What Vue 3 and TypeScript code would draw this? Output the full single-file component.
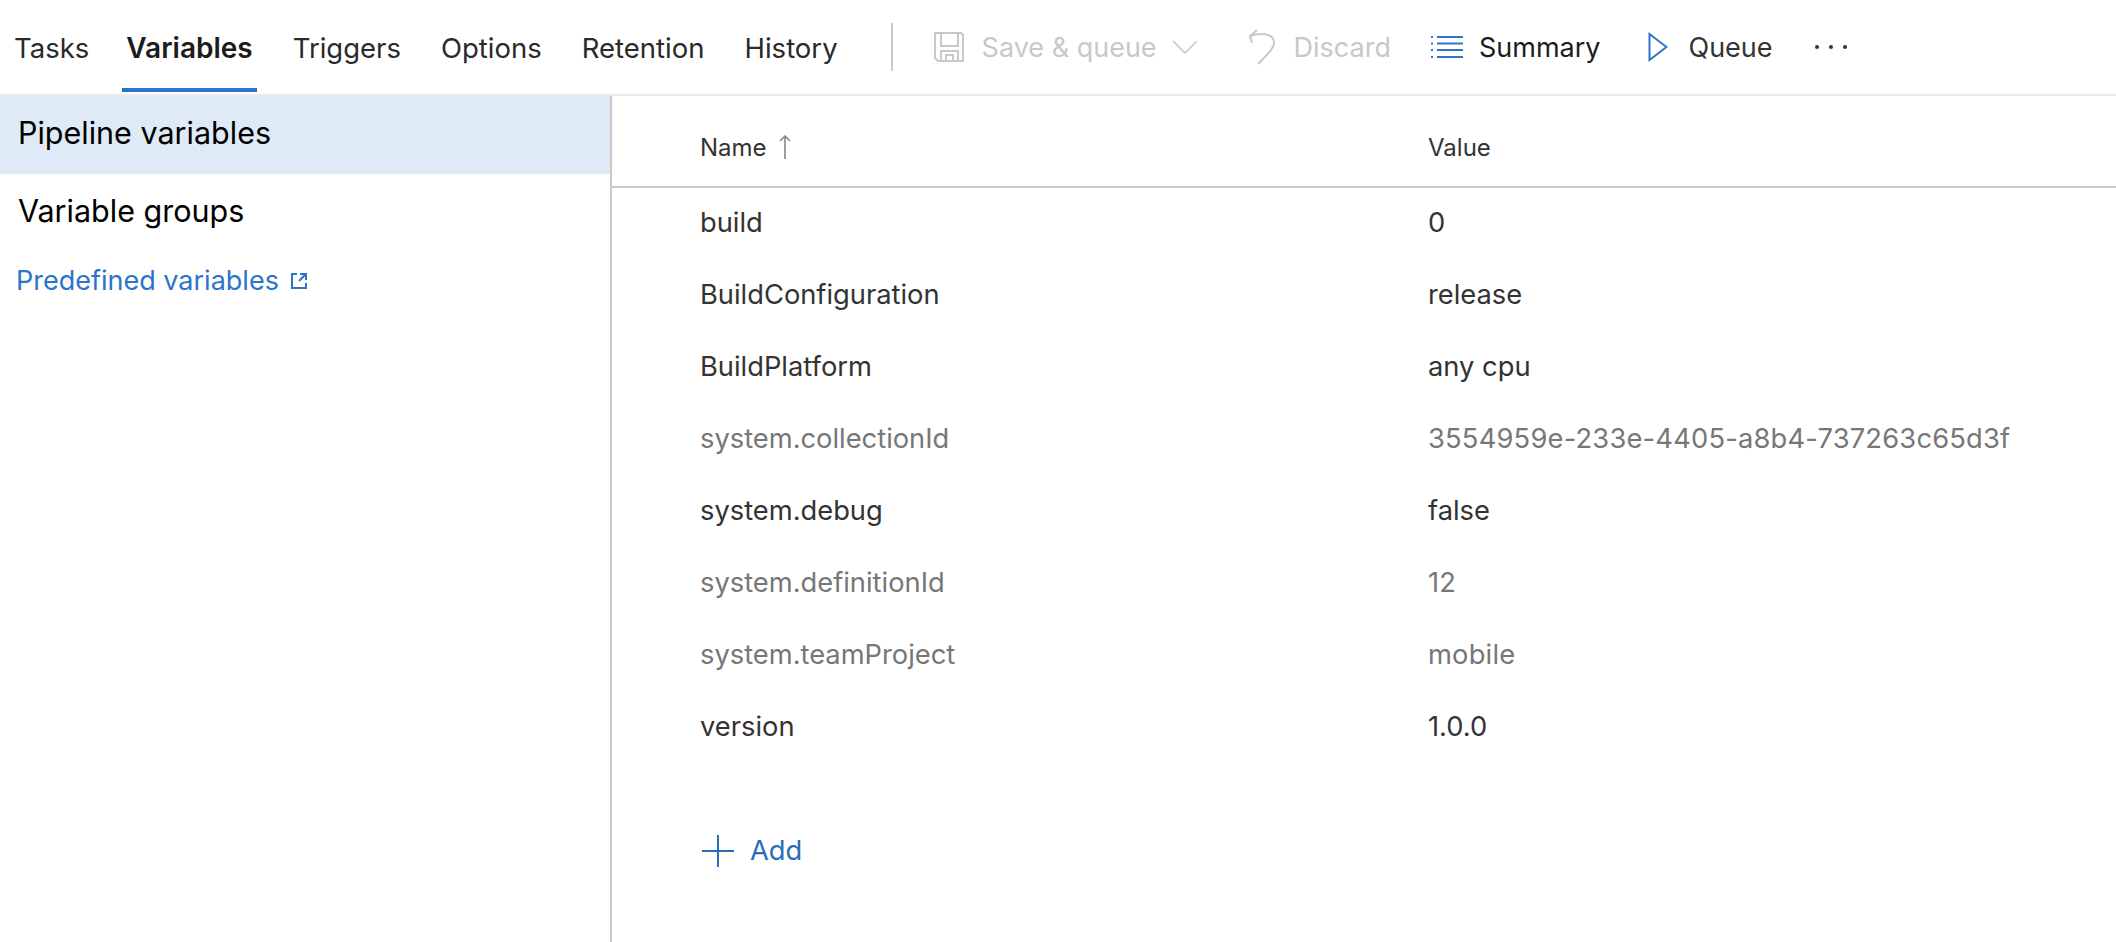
<template>
  <div class="page">
    <header class="topbar">
      <nav class="tabs">
        <div v-for="tab in tabs" :key="tab" :class="['tab', { active: tab === 'Variables' }]">{{ tab }}</div>
      </nav>
      <div class="divider"></div>
      <div class="action disabled save">
        <svg width="30" height="30" viewBox="0 0 30 30" fill="none" stroke="#c8c8c8" stroke-width="2">
          <path d="M4 1h23l2 2v26H4l-3-3V1z" />
          <path d="M7 1v13h17V1" />
          <path d="M7 29V19h17v10" />
          <path d="M12 29v-6h7v6" />
        </svg>
        <span class="save-label">Save &amp; queue</span>
        <svg class="chevron" width="26" height="14" viewBox="0 0 26 14" fill="none" stroke="#c8c8c8" stroke-width="1.6">
          <path d="M1 1l12 12L25 1" />
        </svg>
      </div>
      <div class="action disabled discard">
        <svg width="28" height="36" viewBox="0 0 28 36" fill="none" stroke="#c8c8c8" stroke-width="2">
          <path d="M9 1L2 7l2 7" />
          <path d="M2 7c8-3 24-4 24 7 0 5-6 11-16 21" />
        </svg>
        <span>Discard</span>
      </div>
      <div class="action summary">
        <svg width="32" height="22" viewBox="0 0 32 22" fill="#2b74c9">
          <rect x="0" y="0" width="2" height="2" />
          <rect x="6" y="0" width="26" height="2" />
          <rect x="0" y="6.500" width="2" height="2" />
          <rect x="6" y="6.500" width="26" height="2" />
          <rect x="0" y="13" width="2" height="2" />
          <rect x="6" y="13" width="26" height="2" />
          <rect x="0" y="20" width="2" height="2" />
          <rect x="6" y="20" width="26" height="2" />
        </svg>
        <span>Summary</span>
      </div>
      <div class="action queue">
        <svg width="20" height="30" viewBox="0 0 20 30" fill="none" stroke="#2b74c9" stroke-width="2">
          <path d="M1.500 2l17 13-17 13z" />
        </svg>
        <span>Queue</span>
      </div>
      <div class="more"><i></i><i></i><i></i></div>
    </header>

    <div class="body">
      <aside class="sidebar">
        <div class="side-item selected">Pipeline variables</div>
        <div class="side-item">Variable groups</div>
        <a class="side-link">
          Predefined variables
          <svg width="16" height="16" viewBox="0 0 16 16" fill="none" stroke="#2b74c9" stroke-width="2">
            <path d="M6 1H1v14h14v-5" />
            <path d="M9 1h6v6M15 1L8 8" />
          </svg>
        </a>
      </aside>

      <main class="content">
        <div class="row head">
          <div class="col-name">
            Name
            <svg width="12" height="24" viewBox="0 0 12 24" fill="none" stroke="#888" stroke-width="1.600">
              <path d="M6 1v23M1 6l5-5 5 5" />
            </svg>
          </div>
          <div class="col-value">Value</div>
        </div>
        <div v-for="item in variables" :key="item.name" :class="['row', { muted: item.system }]">
          <div class="col-name">{{ item.name }}</div>
          <div class="col-value">{{ item.value }}</div>
        </div>
        <div class="add">
          <svg width="32" height="32" viewBox="0 0 32 32" fill="none" stroke="#2b6cb8" stroke-width="2">
            <path d="M16 0v32M0 16h32" />
          </svg>
          <span>Add</span>
        </div>
      </main>
    </div>
  </div>
</template>

<script setup lang="ts">
const tabs = ['Tasks', 'Variables', 'Triggers', 'Options', 'Retention', 'History'];

const variables = [
  { name: 'build', value: '0', system: false },
  { name: 'BuildConfiguration', value: 'release', system: false },
  { name: 'BuildPlatform', value: 'any cpu', system: false },
  { name: 'system.collectionId', value: '3554959e-233e-4405-a8b4-737263c65d3f', system: true },
  { name: 'system.debug', value: 'false', system: false },
  { name: 'system.definitionId', value: '12', system: true },
  { name: 'system.teamProject', value: 'mobile', system: true },
  { name: 'version', value: '1.0.0', system: false },
];
</script>

<style>
html,
body {
  margin: 0;
  background: #fff;
}
</style>

<style scoped>
.page {
  width: 2116px;
  height: 942px;
  overflow: hidden;
  font-family: Inter, "Liberation Sans", sans-serif;
  color: #333;
}

.topbar {
  display: flex;
  align-items: center;
  height: 94px;
  border-bottom: 2px solid #eaeaea;
  font-size: 27px;
}

.tabs {
  display: flex;
  align-self: stretch;
  gap: 32px;
  padding-left: 10px;
  font-size: 27.5px;
}

.tab {
  display: flex;
  align-items: center;
  box-sizing: border-box;
  height: 92px;
  padding: 8px 4px 0;
  border-bottom: 4px solid transparent;
  color: #2a2a2a;
}

.tab:first-child {
  margin-right: -3px;
}

.tab.active {
  font-size: 28px;
  font-weight: 600;
  color: #1c1c1c;
  border-bottom-color: #2b74c9;
}

.divider {
  width: 2px;
  height: 48px;
  margin: 0 41px 0 49px;
  background: #c8c8c8;
}

.action {
  display: flex;
  align-items: center;
}

.disabled {
  color: #c8c8c8;
}

.save-label {
  margin-left: 18px;
}

.chevron {
  margin-left: 15px;
}

.discard {
  margin-left: 50px;
  gap: 18px;
}

.summary {
  margin-left: 40px;
  gap: 16px;
  color: #1c1c1c;
}

.queue {
  margin-left: 48px;
  gap: 20px;
}

.more {
  display: flex;
  gap: 10px;
  margin-left: 42px;
}

.more i {
  width: 4px;
  height: 4px;
  border-radius: 50%;
  background: #333;
}

.body {
  display: flex;
  height: 846px;
}

.sidebar {
  width: 610px;
  border-right: 2px solid #c8c8c8;
  flex-shrink: 0;
}

.side-item {
  display: flex;
  align-items: center;
  height: 78px;
  padding: 0 0 5px 18px;
  box-sizing: border-box;
  font-size: 30.5px;
  color: #000;
}

.side-item.selected {
  background: #deeaf6;
}

.side-link {
  display: flex;
  align-items: center;
  gap: 12px;
  margin: 12px 0 0 16px;
  font-size: 27px;
  color: #2b74c9;
}

.content {
  flex: 1;
  font-size: 27.3px;
}

.row {
  display: flex;
  align-items: center;
  box-sizing: border-box;
  height: 72px;
  padding: 0 0 4px 88px;
}

.row.head {
  height: 92px;
  padding: 12px 0 0 88px;
  border-bottom: 2px solid #c8c8c8;
  font-size: 24px;
}

.row.muted {
  color: #777;
}

.row.muted .col-value {
  letter-spacing: 0.2px;
}

.col-name {
  display: flex;
  align-items: center;
  gap: 12px;
  width: 728px;
}

.add {
  display: flex;
  align-items: center;
  gap: 16px;
  margin: 70px 0 0 90px;
  color: #2b6cb8;
}
</style>
